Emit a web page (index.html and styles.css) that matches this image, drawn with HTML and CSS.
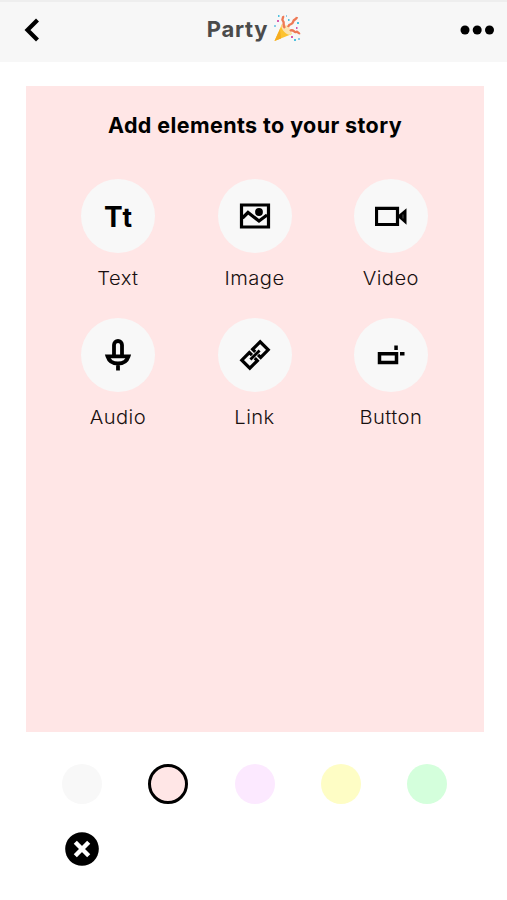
FILE: index.html
```
<!DOCTYPE html>
<html lang="en">
<head>
<meta charset="utf-8">
<title>Party</title>
<link rel="stylesheet" href="styles.css">
</head>
<body>
<header class="bar">
  <svg class="back" width="16" height="24" viewBox="0 0 16 24"><path d="M13.500 2 3.500 12l10 10" fill="none" stroke="#000" stroke-width="4.200"/></svg>
  <div class="title">
    <h1>Party</h1>
    <svg class="popper" width="28" height="28" viewBox="0 0 28 28" fill="none">
      <path d="M9 9 1.500 26 19 19Z" fill="#fdc32f"/>
      <path d="m7 14-5.500 12L8 23.500Z" fill="#f5ac20"/>
      <ellipse cx="13.500" cy="14.500" rx="3.200" ry="6.600" transform="rotate(-43 13.500 14.500)" fill="#fbe3ae"/>
      <path d="M12 13c-3-3 0-5-2-7s1-3 0-5M15 12c2-5 4-1 5-5s3-1 4-5M17 16c3-3 4 2 6 1s2 2 4 1" stroke="#ee7955" stroke-width="2.400"/>
      <path d="M5 1h1.500M24 8h2M21 25h2M15 5h1.500" stroke="#4fc1df" stroke-width="2"/>
      <path d="M4 6h2M18 22h2M23 13h1.500" stroke="#d65baf" stroke-width="2.200"/>
      <path d="M1 11h2M25 24h2M13 1h1" stroke="#8bcbe8" stroke-width="1.800"/>
    </svg>
  </div>
  <svg class="more" width="34" height="10" viewBox="0 0 34 10"><circle cx="5" cy="5" r="4.500"/><circle cx="17.200" cy="5" r="4.500"/><circle cx="29.500" cy="5" r="4.500"/></svg>
</header>
<main>
  <section class="card">
    <h2>Add elements to your story</h2>
    <div class="tools">
      <div class="tool"><span class="disc tt"><span>T</span><span class="small">t</span></span><span class="label">Text</span></div>
      <div class="tool"><span class="disc"><svg width="32" height="32" viewBox="0 0 32 32" fill="none" stroke="#000" stroke-width="3.200"><path d="M2.500 5h27v22h-27zM3.500 18l5.500-5.500 11 8.500 8-6"/><circle cx="20" cy="12" r="3.900" fill="#000" stroke="none"/></svg></span><span class="label">Image</span></div>
      <div class="tool"><span class="disc"><svg width="32" height="32" viewBox="0 0 32 32" fill="none" stroke="#000"><path d="M1.500 8.300h21v16.200h-21z" stroke-width="3.200"/><path d="m22 16.200 9.500-8v16.500z" fill="#000" stroke="none"/><path d="M28 14.500v4" stroke="#555" stroke-width="1"/></svg></span><span class="label">Video</span></div>
      <div class="tool"><span class="disc"><svg width="32" height="32" viewBox="0 0 32 32" fill="none" stroke="#000" stroke-width="3.800"><path d="M12 17V6a4 4 0 0 1 8 0V17M5.500 17.300h21C25 22 21 24.500 16 24.500S7 22 5.500 17.300ZM16 25v6.500"/></svg></span><span class="label">Audio</span></div>
      <div class="tool"><span class="disc"><svg width="34" height="34" viewBox="0 0 34 34"><g transform="rotate(-45 17 17)" fill="none" stroke="#000" stroke-width="3.200"><path d="M14.700 15v-3.700H4v11.400h10.700V19M19.300 15v-3.700H30v11.400H19.300V19"/><path d="M10.500 17h13" stroke-width="2.800"/></g></svg></span><span class="label">Link</span></div>
      <div class="tool"><span class="disc"><svg width="32" height="32" viewBox="0 0 32 32"><path d="M4.500 14.800h17v8.800h-17z" fill="none" stroke="#000" stroke-width="3.500"/><path d="M19.300 6.500h3.500v4.500h-3.500zM25 13h4.500v3.500H25z"/></svg></span><span class="label">Button</span></div>
    </div>
  </section>
  <div class="swatches">
    <span class="swatch gray"></span><span class="swatch pink"></span><span class="swatch lilac"></span><span class="swatch yellow"></span><span class="swatch green"></span>
  </div>
  <svg class="close" width="34" height="34" viewBox="0 0 34 34"><circle cx="17" cy="17" r="16.800"/><path d="m10.300 10.300 13.400 13.400M23.700 10.300 10.300 23.700" stroke="#fff" stroke-width="4.400"/></svg>
</main>
</body>
</html>
```
FILE: styles.css
```
* { box-sizing: border-box; }
body { margin: 0; background: #fff; color: #000; font-family: Inter, sans-serif; }
h1, h2 { margin: 0; font-weight: 700; white-space: nowrap; }
svg { display: block; flex: none; }
.bar {
  height: 62px;
  padding: 0 13px 4px 24px;
  display: grid;
  grid-template-columns: 40px 1fr 40px;
  align-items: center;
  background: #f7f7f7;
  border-top: 2px solid #eee;
}
.title { display: flex; justify-content: center; align-items: center; gap: 5px; margin-left: -10px; }
h1 { font-size: 22px; line-height: 26px; color: #4b4b4b; letter-spacing: .7px; margin-top: -2px; }
.popper { margin-top: -2px; }
.more { justify-self: end; }
.card { margin: 24px 23px 0 26px; height: 646px; background: #ffe6e6; padding-top: 25px; }
h2 { text-align: center; font-size: 21.500px; line-height: 28px; letter-spacing: .4px; }
.tools {
  display: grid;
  grid-template-columns: repeat(3, 136.500px);
  grid-auto-rows: 139px;
  justify-content: center;
  margin: 40px 1px 0 0;
}
.tool { display: flex; flex-direction: column; align-items: center; }
.disc {
  width: 74px;
  height: 74px;
  border-radius: 50%;
  background: #f8f8f8;
  display: flex;
  align-items: center;
  justify-content: center;
}
.tt { font-size: 28px; font-weight: 700; align-items: baseline; line-height: 76px; }
.tt .small { font-size: 26px; }
.label { margin-top: 11.500px; font-size: 18.500px; line-height: 26px; font-weight: 350; color: #181010; letter-spacing: .4px; transform: scaleX(1.090); }
.swatches { display: flex; justify-content: space-between; margin: 32px 60px 0 62px; }
.swatch { width: 40px; height: 40px; border-radius: 50%; }
.gray { background: #f8f8f8; }
.pink { background: #ffe6e6; border: 3px solid #000; }
.lilac { background: #fce9ff; }
.yellow { background: #fefdc5; }
.green { background: #d4ffdc; }
.close { margin: 28px 0 0 65px; }
```
